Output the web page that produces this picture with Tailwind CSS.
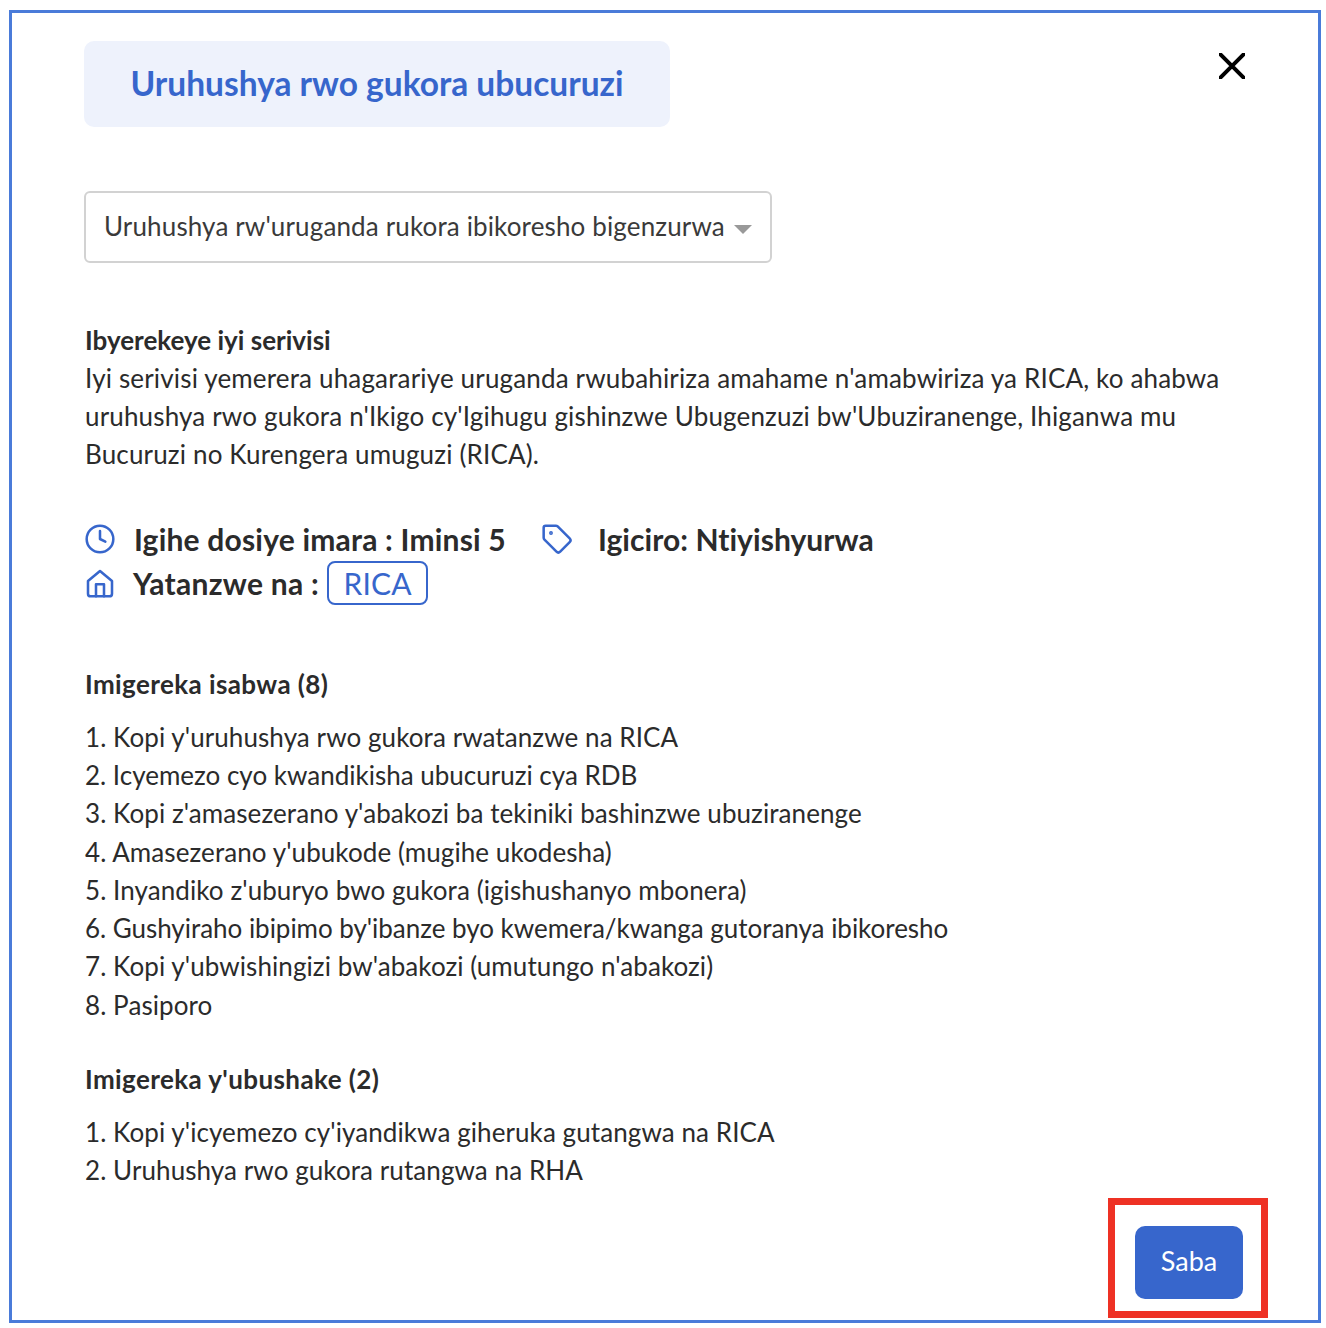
<!DOCTYPE html>
<html lang="en">
<head>
<meta charset="UTF-8" />
<title>Uruhushya rwo gukora ubucuruzi</title>
<script src="https://cdn.jsdelivr.net/npm/@tailwindcss/browser@4"></script>
</head>
<body class="bg-white text-[#2b2b2b] font-['Lato',sans-serif]">
    <div class="relative w-[1312px] h-[1313px] mt-[10px] ml-[9px] border-[3px] border-[#4a7bd9] pl-[73px] pr-[60px] pt-[28px]">
        <!-- Header -->
        <div class="flex items-start justify-between">
            <h1 class="-ml-px w-[586px] h-[86px] pb-[2px] flex items-center justify-center rounded-[10px] bg-[#eef2fc] text-[33.500px] font-bold text-[#3766cc]">Uruhushya rwo gukora ubucuruzi</h1>
            <button class="mt-[12px] mr-[13px]" aria-label="Close">
                <svg class="w-[26px] h-[26px]" viewBox="0 0 26 26" fill="none" stroke="#000" stroke-width="4" stroke-linecap="round"><path d="M1 1l24 24M25 1L1 25"/></svg>
            </button>
        </div>

        <!-- Select -->
        <div class="-ml-px mt-[64px] w-[688px] h-[72px] flex items-center pl-[18px] border-2 border-[#d2d2d2] rounded-[6px] text-[26px] tracking-[0.14px] text-[#3a3a3a]">
            <span class="-mt-[1px]">Uruhushya rw'uruganda rukora ibikoresho bigenzurwa</span>
            <span class="ml-[9px] mt-[5px] w-0 h-0 border-x-[9px] border-x-transparent border-t-[9px] border-t-[#999]"></span>
        </div>

        <!-- About -->
        <div class="mt-[57.600px] text-[26px] leading-[38.300px]">
            <h2 class="font-bold">Ibyerekeye iyi serivisi</h2>
            <p class="tracking-[0.16px]">Iyi serivisi yemerera uhagarariye uruganda rwubahiriza amahame n'amabwiriza ya RICA, ko ahabwa<br />uruhushya rwo gukora n'Ikigo cy'Igihugu gishinzwe Ubugenzuzi bw'Ubuziranenge, Ihiganwa mu<br />Bucuruzi no Kurengera umuguzi (RICA).</p>
        </div>

        <!-- Meta -->
        <div class="mt-[43.400px] text-[30px] font-bold tracking-[0.2px]">
            <div class="flex items-center h-[44px]">
                <svg class="w-[32px] h-[32px] shrink-0 -ml-[1px]" viewBox="0 0 24 24" fill="none" stroke="#3766cc" stroke-width="1.900" stroke-linecap="round" stroke-linejoin="round"><circle cx="12" cy="12" r="10"/><path d="M12 6v6l4 2"/></svg>
                <span class="ml-[18px]">Igihe dosiye imara : Iminsi 5</span>
                <svg class="ml-[35px] w-[32px] h-[32px] shrink-0" viewBox="0 0 24 24" fill="none" stroke="#3766cc" stroke-width="1.900" stroke-linecap="round" stroke-linejoin="round"><path d="M2 3.500A1.500 1.500 0 0 1 3.500 2h7.600a2 2 0 0 1 1.400.6l9 9a2 2 0 0 1 0 2.800l-7.100 7.100a2 2 0 0 1-2.800 0l-9-9A2 2 0 0 1 2 11.100z"/><circle cx="7.500" cy="7.500" r=".5" fill="#3766cc"/></svg>
                <span class="ml-[25px] tracking-[0.06px]">Igiciro: Ntiyishyurwa</span>
            </div>
            <div class="flex items-center h-[44px]">
                <svg class="w-[32px] h-[32px] shrink-0 -ml-[1px]" viewBox="0 0 24 24" fill="none" stroke="#3766cc" stroke-width="1.900" stroke-linecap="round" stroke-linejoin="round"><path d="M3 10.500 12 3l9 7.500V20a2 2 0 0 1-2 2H5a2 2 0 0 1-2-2z"/><path d="M9 22v-9h6v9"/></svg>
                <span class="ml-[17px] tracking-[0.28px]">Yatanzwe na :</span>
                <span class="ml-[8px] w-[101px] h-[44px] flex items-center justify-center rounded-[8px] border-2 border-[#3766cc] text-[#3766cc] font-normal">RICA</span>
            </div>
        </div>

        <!-- Required documents -->
        <h2 class="mt-[60px] text-[26px] font-bold leading-[38px] tracking-[0.4px]">Imigereka isabwa (8)</h2>
        <ol class="mt-[14.500px] text-[26px] leading-[38.280px] tracking-[0.08px]">
            <li>1. Kopi y'uruhushya rwo gukora rwatanzwe na RICA</li>
            <li class="tracking-[0px]">2. Icyemezo cyo kwandikisha ubucuruzi cya RDB</li>
            <li>3. Kopi z'amasezerano y'abakozi ba tekiniki bashinzwe ubuziranenge</li>
            <li>4. Amasezerano y'ubukode (mugihe ukodesha)</li>
            <li>5. Inyandiko z'uburyo bwo gukora (igishushanyo mbonera)</li>
            <li class="tracking-[-0.03px]">6. Gushyiraho ibipimo by'ibanze byo kwemera/kwanga gutoranya ibikoresho</li>
            <li>7. Kopi y'ubwishingizi bw'abakozi (umutungo n'abakozi)</li>
            <li>8. Pasiporo</li>
        </ol>

        <!-- Optional documents -->
        <h2 class="mt-[36.500px] text-[26px] font-bold leading-[38px] tracking-[0.4px]">Imigereka y'ubushake (2)</h2>
        <ol class="mt-[14.500px] text-[26px] leading-[38.280px] tracking-[0.08px]">
            <li>1. Kopi y'icyemezo cy'iyandikwa giheruka gutangwa na RICA</li>
            <li>2. Uruhushya rwo gukora rutangwa na RHA</li>
        </ol>

        <!-- Submit button with its annotation box -->
        <button class="absolute left-[1123px] top-[1213px] w-[108px] h-[73px] pb-[2px] rounded-[10px] bg-[#3766cc] text-white text-[27px]">Saba</button>
        <div class="absolute left-[1096px] top-[1185px] w-[160px] h-[120px] border-[7px] border-[#ee3124]"></div>
    </div>
</body>
</html>
